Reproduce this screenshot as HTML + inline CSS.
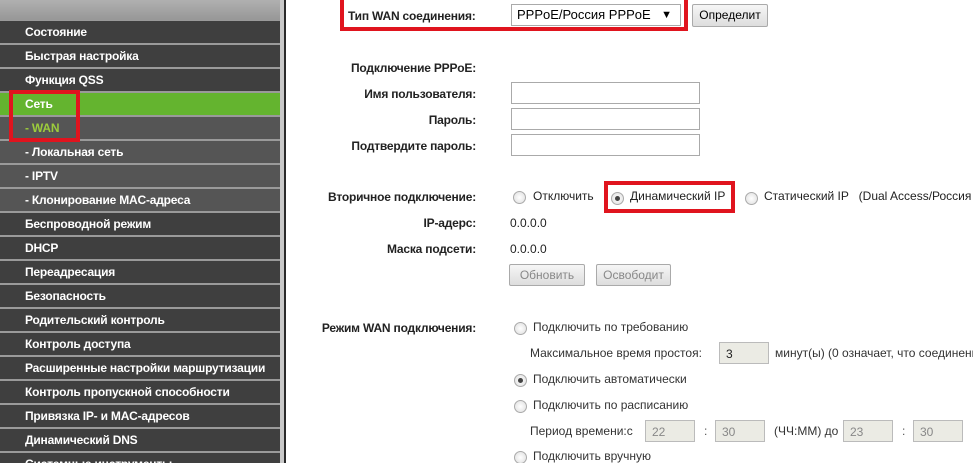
<!DOCTYPE html>
<html><head><meta charset="utf-8"><style>
*{margin:0;padding:0;box-sizing:border-box}
html,body{width:973px;height:463px;overflow:hidden}
body{background:#fff;font-family:"Liberation Sans",Arial,sans-serif;position:relative}
#sb{position:absolute;left:0;top:0;width:280px;height:463px;background:#9a9a9a}
#sb .top{position:absolute;left:0;top:0;width:280px;height:20px;background:linear-gradient(#b0b0b0,#979797)}
.it{position:absolute;left:0;width:280px;height:22px;background:#3f3f3f;color:#fff;font-weight:bold;font-size:12px;line-height:22px;padding-left:25px;white-space:nowrap;letter-spacing:-0.2px}
.sub{background:#555}
.grn{background:#64b42f}
#edge{position:absolute;left:280px;top:0;width:4px;height:463px;background:#c8c8c8}
#edge2{position:absolute;left:284px;top:0;width:2px;height:463px;background:#2a2a2a}
.a{position:absolute;font-size:12px;color:#222;white-space:nowrap}
.b{font-weight:bold;right:497px;text-align:right;letter-spacing:-0.2px}
.inp{position:absolute;border:1px solid #aaa;background:#fff;height:22px}
.dis{background:#ebebe4;border:1px solid #bbb;color:#888;font-size:12px;padding:4px 0 0 6px}
.btn{position:absolute;border:1px solid #aaa;background:linear-gradient(#f6f6f6,#ddd);font-size:12px;text-align:center;line-height:20px;border-radius:2px}
.r{position:absolute;width:13px;height:13px;border-radius:50%;border:1px solid #aaa;background:radial-gradient(#fff,#ddd)}
.r.on::after{content:"";position:absolute;left:3px;top:3px;width:5px;height:5px;border-radius:50%;background:#444}
.red{position:absolute;border:4px solid #e0141e}
</style></head><body>
<div id="sb"><div class="top"></div>
<div class="it" style="top:21px">Состояние</div>
<div class="it" style="top:45px">Быстрая настройка</div>
<div class="it" style="top:69px">Функция QSS</div>
<div class="it grn" style="top:93px">Сеть</div>
<div class="it sub" style="top:117px;color:#9ccc3c">- WAN</div>
<div class="it sub" style="top:141px">- Локальная сеть</div>
<div class="it sub" style="top:165px">- IPTV</div>
<div class="it sub" style="top:189px">- Клонирование MAC-адреса</div>
<div class="it" style="top:213px">Беспроводной режим</div>
<div class="it" style="top:237px">DHCP</div>
<div class="it" style="top:261px">Переадресация</div>
<div class="it" style="top:285px">Безопасность</div>
<div class="it" style="top:309px">Родительский контроль</div>
<div class="it" style="top:333px">Контроль доступа</div>
<div class="it" style="top:357px">Расширенные настройки маршрутизации</div>
<div class="it" style="top:381px">Контроль пропускной способности</div>
<div class="it" style="top:405px">Привязка IP- и MAC-адресов</div>
<div class="it" style="top:429px">Динамический DNS</div>
<div class="it" style="top:453px">Системные инструменты</div>
</div>
<div id="edge"></div><div id="edge2"></div>
<div class="red" style="left:9px;top:90px;width:71px;height:52px"></div>

<div class="a b" style="top:9px;right:auto;left:348px">Тип WAN соединения:</div>
<div class="inp" style="left:511px;top:4px;width:170px;font-size:13px;padding:2px 0 0 5px">PPPoE/Россия PPPoE<span style="position:absolute;right:8px;top:4px;font-size:11px">▼</span></div>
<div class="red" style="left:340px;top:-4px;width:348px;height:35px"></div>
<div class="btn" style="left:692px;top:4px;width:76px;height:23px">Определит</div>

<div class="a b" style="top:61px">Подключение PPPoE:</div>
<div class="a b" style="top:87px">Имя пользователя:</div>
<div class="a b" style="top:113px">Пароль:</div>
<div class="a b" style="top:139px">Подтвердите пароль:</div>
<div class="inp" style="left:511px;top:82px;width:189px"></div>
<div class="inp" style="left:511px;top:108px;width:189px"></div>
<div class="inp" style="left:511px;top:134px;width:189px"></div>

<div class="a b" style="top:190px">Вторичное подключение:</div>
<div class="r" style="left:513px;top:191px"></div><div class="a" style="left:533px;top:189px">Отключить</div>
<div class="r on" style="left:611px;top:192px"></div><div class="a" style="left:630px;top:189px">Динамический IP</div>
<div class="red" style="left:604px;top:181px;width:131px;height:32px"></div>
<div class="r" style="left:745px;top:192px"></div><div class="a" style="left:764px;top:189px">Статический IP &nbsp;&nbsp;(Dual Access/Россия</div>
<div class="a b" style="top:216px">IP-адерс:</div><div class="a" style="left:510px;top:216px">0.0.0.0</div>
<div class="a b" style="top:242px">Маска подсети:</div><div class="a" style="left:510px;top:242px">0.0.0.0</div>
<div class="btn" style="left:509px;top:264px;width:76px;height:22px;color:#888">Обновить</div>
<div class="btn" style="left:596px;top:264px;width:75px;height:22px;color:#888">Освободит</div>

<div class="a b" style="top:321px">Режим WAN подключения:</div>
<div class="r" style="left:514px;top:322px"></div><div class="a" style="left:533px;top:320px;color:#333">Подключить по требованию</div>
<div class="a" style="left:530px;top:346px;color:#333">Максимальное время простоя:</div>
<div class="inp dis" style="left:719px;top:342px;width:50px;color:#222">3</div>
<div class="a" style="left:775px;top:346px;color:#333">минут(ы) (0 означает, что соединение</div>
<div class="r on" style="left:514px;top:374px"></div><div class="a" style="left:533px;top:372px;color:#333">Подключить автоматически</div>
<div class="r" style="left:514px;top:400px"></div><div class="a" style="left:533px;top:398px;color:#333">Подключить по расписанию</div>
<div class="a" style="left:530px;top:424px;color:#333">Период времени:с</div>
<div class="inp dis" style="left:645px;top:420px;width:50px">22</div>
<div class="a" style="left:704px;top:424px;color:#555">:</div>
<div class="inp dis" style="left:715px;top:420px;width:50px">30</div>
<div class="a" style="left:774px;top:424px;color:#333">(ЧЧ:ММ) до</div>
<div class="inp dis" style="left:843px;top:420px;width:50px">23</div>
<div class="a" style="left:902px;top:424px;color:#555">:</div>
<div class="inp dis" style="left:913px;top:420px;width:50px">30</div>
<div class="r" style="left:514px;top:451px"></div><div class="a" style="left:533px;top:449px;color:#333">Подключить вручную</div>
</body></html>
